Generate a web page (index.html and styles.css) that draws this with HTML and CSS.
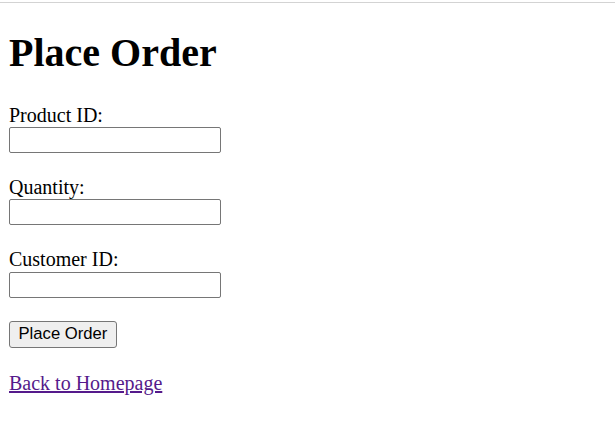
FILE: index.html
```html
<!DOCTYPE html>
<html>
<head>
<meta charset="utf-8">
<title>Place Order</title>
<link rel="stylesheet" href="styles.css">
</head>
<body>
<div class="topline"></div>
<h1 class="title">Place Order</h1>
<form class="order-form">
  <label class="field-label" for="productId">Product ID:</label><br>
  <input class="field-input" type="text" id="productId"><br><br>
  <label class="field-label" for="quantity">Quantity:</label><br>
  <input class="field-input" type="text" id="quantity"><br><br>
  <label class="field-label" for="customerId">Customer ID:</label><br>
  <input class="field-input" type="text" id="customerId"><br><br>
  <button class="submit-btn" type="submit">Place Order</button>
</form>
<p class="back"><a class="back-link" href="#">Back to Homepage</a></p>
</body>
</html>
```
FILE: styles.css
```css
html, body {
  margin: 0;
  padding: 0;
}
body {
  font-family: "Liberation Serif", "Times New Roman", serif;
  font-size: 20px;
  line-height: 23.2px;
  color: #000;
  background: #fff;
  padding: 0 9px;
}
.topline {
  height: 1px;
  background: #d3d3d3;
  margin: 2px -9px 0;
}
.title {
  font-size: 40px;
  font-weight: bold;
  line-height: 46px;
  margin: 27px 0 27.5px;
}
.order-form {
  margin: 0;
}
.field-label {
  font-size: 20px;
}
.field-input {
  font-family: "Liberation Sans", Arial, sans-serif;
  font-size: 16.67px;
  width: 212px;
  height: 26px;
  box-sizing: border-box;
  border: 1px solid #767676;
  border-radius: 2px;
  padding: 1px 3px;
  margin: 0;
  vertical-align: baseline;
}
.submit-btn {
  font-family: "Liberation Sans", Arial, sans-serif;
  font-size: 16.67px;
  height: 27px;
  box-sizing: border-box;
  padding: 1px 8.5px;
  border: 1px solid #767676;
  border-radius: 3px;
  background: #efefef;
  color: #000;
  margin: 0;
}
.back {
  margin: 24px 0;
}
.back-link {
  color: #551a8b;
}
```
